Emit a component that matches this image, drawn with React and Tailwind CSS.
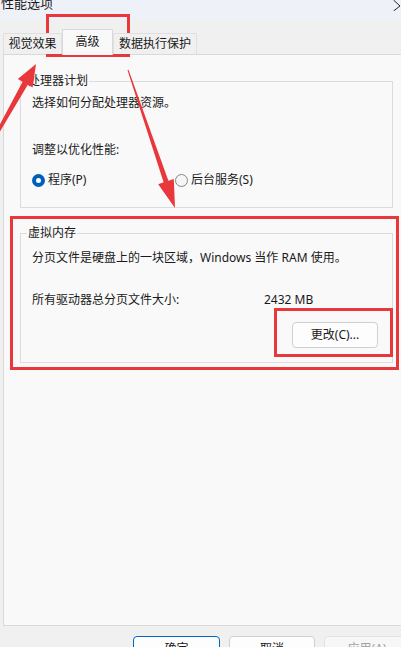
// Performance Options dialog (Advanced tab) with red annotation marks drawn over it
const RED = '#e8383b'

function Tab({ label, active, width }) {
  if (active) {
    return (
      <div
        className={`relative z-10 -mb-px h-[26px] ${width} flex items-center justify-center bg-[#f9f9f9] border border-b-0 border-[#d9d9d9]`}
      >
        <span className="-mt-[1px]">{label}</span>
      </div>
    )
  }
  return (
    <div
      className={`h-[21px] ${width} flex items-center justify-center bg-[#f0f0f0] border-t border-x border-[#e0e0e0]`}
    >
      {label}
    </div>
  )
}

function Radio({ checked, label }) {
  return (
    <label className="flex items-center gap-[3px] leading-[16px]">
      {checked ? (
        <span className="w-[13px] h-[13px] rounded-full bg-[#005fb8] flex items-center justify-center">
          <span className="w-[5px] h-[5px] rounded-full bg-white" />
        </span>
      ) : (
        <span className="w-[13px] h-[13px] rounded-full border border-[#858585] bg-[#f5f5f5]" />
      )}
      <span>{label}</span>
    </label>
  )
}

function Group({ title, className, children }) {
  return (
    <fieldset className={`w-[373px] border border-[#dcdcdc] pl-[11px] pr-[14px] ${className}`}>
      <legend className="-ml-[5px] px-[1px] leading-[16px]">{title}</legend>
      {children}
    </fieldset>
  )
}

function Annotations() {
  return (
    <svg className="absolute inset-0 pointer-events-none" width="401" height="647" viewBox="0 0 401 647">
      <g fill="none" stroke={RED} strokeWidth="3">
        <rect x="47.5" y="15.5" width="81" height="40" />
        <rect x="11.5" y="217.5" width="386" height="151" />
        <rect x="275.5" y="309.5" width="116" height="46" />
      </g>
      <g fill={RED}>
        {/* arrow pointing up to the tab */}
        <polygon points="-4.4,138.8 27.8,84.7 32.6,87.6 36,64 17.8,79.1 22.6,81.7 -7,137.4" />
        {/* arrow pointing down to the virtual memory group */}
        <polygon points="128.5,69.8 168.4,180.7 173.8,178.9 175,208 158.2,184.2 163.6,182.3 127.5,70.2" />
      </g>
    </svg>
  )
}

export default function App() {
  return (
    <div className="relative w-[401px] h-[647px] overflow-hidden bg-[#f0f0f0] text-[12px] text-[#1a1a1a] font-['Noto_Sans','Noto_Sans_CJK_SC',sans-serif]">
      {/* title bar */}
      <div className="h-[20px] bg-[#eef2f8] flex items-start justify-between">
        <span className="pl-[1px] -mt-[5px] text-[13px] leading-[16px]">性能选项</span>
        <svg width="9" height="11" viewBox="0 0 9 11" className="mr-[-1px]">
          <path d="M0.5 0 L7 6 M7 6 L0.5 11" stroke="#222" strokeWidth="1" fill="none" />
        </svg>
      </div>

      {/* tabs */}
      <div className="relative z-10 h-[34px] flex items-end pl-[3px]">
        <Tab label="视觉效果" width="w-[59px]" />
        <Tab label="高级" width="w-[51px]" active />
        <Tab label="数据执行保护" width="w-[84px]" />
      </div>

      {/* tab page */}
      <div className="ml-[3px] w-[420px] h-[572px] bg-[#f9f9f9] border-l border-y border-[#d9d9d9] pt-[18px] pl-[16px]">
        <Group title="处理器计划" className="pb-[19px]">
          <p className="mt-[6px] leading-[16px]">选择如何分配处理器资源。</p>
          <p className="mt-[31px] leading-[16px]">调整以优化性能:</p>
          <div className="mt-[14px] flex">
            <div className="w-[143px]">
              <Radio checked label="程序(P)" />
            </div>
            <Radio label="后台服务(S)" />
          </div>
        </Group>

        <Group title="虚拟内存" className="mt-[17px] pb-[14px]">
          <p className="mt-[9px] leading-[16px]">分页文件是硬盘上的一块区域，Windows 当作 RAM 使用。</p>
          <div className="mt-[26px] flex leading-[16px]">
            <span className="w-[232px]">所有驱动器总分页文件大小:</span>
            <span>2432 MB</span>
          </div>
          <div className="mt-[14px] flex justify-end">
            <button className="w-[86px] h-[26px] rounded-[4px] border border-[#d0d0d0] bg-[#fdfdfd] leading-[16px]">
              更改(C)...
            </button>
          </div>
        </Group>
      </div>

      {/* dialog buttons */}
      <div className="mt-[10px] flex gap-[9px] pl-[133px]">
        <button className="w-[87px] h-[26px] shrink-0 rounded-[4px] border-[1.5px] border-[#0067c0] bg-[#fdfdfd] leading-[16px]">
          确定
        </button>
        <button className="w-[86px] h-[26px] shrink-0 rounded-[4px] border border-[#d0d0d0] bg-[#fdfdfd] leading-[16px]">
          取消
        </button>
        <button className="w-[86px] h-[26px] shrink-0 rounded-[4px] border border-[#e3e3e3] bg-[#f7f7f7] text-[#a0a0a0] leading-[16px]">
          应用(A)
        </button>
      </div>

      <Annotations />
    </div>
  )
}
